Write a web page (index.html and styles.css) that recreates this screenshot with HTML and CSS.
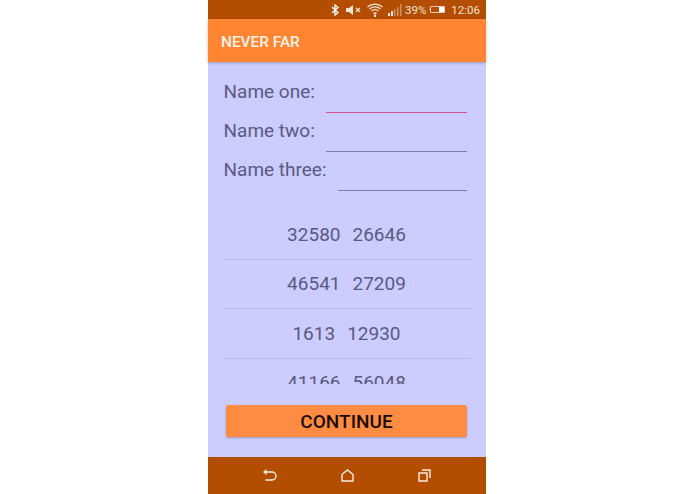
FILE: index.html
```html
<!DOCTYPE html>
<html lang="en">
<head>
    <meta charset="UTF-8">
    <title>Never Far</title>
    <link rel="stylesheet" href="styles.css">
</head>
<body>
    <div class="phone">
        <div class="status-bar">
            <svg class="ic-bt" width="8" height="12" viewBox="0 0 8 12"><path d="M1 3l6 5.500L4 11V1l3 2.500L1 9" fill="none" stroke="#fff" stroke-width="1.300"/></svg>
            <svg class="ic-mute" width="16" height="10" viewBox="0 0 16 10"><path d="M0 3h3l4-3v10L3 7H0z" fill="#f3e3d8"/><path d="M10 3l4 4M14 3l-4 4" stroke="#f3e3d8" stroke-width="1.200"/></svg>
            <svg class="ic-wifi" width="16" height="15" viewBox="0 0 16 15"><path d="M.5 5a11 11 0 0 1 15 0M2.500 7a8 8 0 0 1 11 0M4.500 9a5 5 0 0 1 7 0" fill="none" stroke="#f3e3d8" stroke-width="1.200"/><path d="M6.500 10.500h3v1.500h-3zM7 12.500h2V15H7z" fill="#f3e3d8"/></svg>
            <svg class="ic-signal" width="14" height="12" viewBox="0 0 14 12"><path d="M0 9h2v3H0zM3 7h2v5H3z" fill="#f3e3d8"/><path d="M6 5h1.500v7H6zM9 3h1.500v9H9zM12 0h1.500v12H12z" fill="#cf8f68"/></svg>
            <span class="pct">39%</span>
            <svg class="ic-batt" width="18" height="9" viewBox="0 0 18 9"><path d="M1.500 1.500h14v6h-14z" fill="none" stroke="#e9cdb9" stroke-width="1"/><path d="M.5 3.500h1v2h-1z" fill="#e9cdb9"/><path d="M10 2h5v5h-5z" fill="#fff"/></svg>
            <span class="clock">12:06</span>
        </div>
        <header class="app-bar">NEVER FAR</header>
        <main class="content">
            <div class="names">
                <div class="name-row">
                    <label>Name one:</label>
                    <div class="field active"></div>
                </div>
                <div class="name-row">
                    <label>Name two:</label>
                    <div class="field"></div>
                </div>
                <div class="name-row">
                    <label>Name three:</label>
                    <div class="field"></div>
                </div>
            </div>
            <ul class="numbers">
                <li><span>32580</span><span>26646</span></li>
                <li><span>46541</span><span>27209</span></li>
                <li><span>1613</span><span>12930</span></li>
                <li><span>41166</span><span>56048</span></li>
            </ul>
            <button class="continue">CONTINUE</button>
        </main>
        <nav class="nav-bar">
            <svg width="14" height="13" viewBox="0 0 14 13"><path d="M1.500 3H9a3.800 3.800 0 0 1 0 8H2.500" fill="none" stroke="#fbeee4" stroke-width="1.400"/><path d="M0 3l3.500-3v6z" fill="#fbeee4"/></svg>
            <svg width="13" height="13" viewBox="0 0 13 13"><path d="M1 5.500L6.500 1 12 5.500V12H1z" fill="none" stroke="#fbeee4" stroke-width="1.400"/></svg>
            <svg width="13" height="13" viewBox="0 0 13 13"><path d="M1 4h8v8H1z" fill="none" stroke="#fbeee4" stroke-width="1.400"/><path d="M4 1h8v8" fill="none" stroke="#fbeee4" stroke-width="1.400"/></svg>
        </nav>
    </div>
</body>
</html>
```

FILE: styles.css
```css
html, body {
    margin: 0;
    height: 100%;
    background-color: #fff;
}
body {
    font-family: 'Roboto', sans-serif;
}
.phone {
    width: 278px;
    height: 494px;
    margin-left: 208px;
    display: flex;
    flex-direction: column;
    background-color: #ccccff;
}
.status-bar {
    height: 19px;
    flex: none;
    display: flex;
    align-items: center;
    justify-content: flex-end;
    padding-right: 6px;
    background-color: #b34d00;
    color: #f3e3d8;
    font-size: 11.500px;
}
.ic-bt { margin-right: 7px; }
.ic-mute { margin-right: 5px; }
.ic-wifi { margin-right: 5px; }
.ic-signal { margin-right: 3px; }
.pct { margin-right: 3px; }
.ic-batt { margin-right: 4px; }
.app-bar {
    height: 43px;
    flex: none;
    box-sizing: border-box;
    padding: 14px 0 0 13px;
    background-color: #ff8533;
    color: #fff3e8;
    font-size: 15.400px;
    font-weight: 500;
    box-shadow: 0 1px 3px rgba(0, 0, 0, 0.25);
    position: relative;
}
.content {
    flex: 1;
    display: flex;
    flex-direction: column;
    min-height: 0;
    padding: 0 15px 0 16px;
}
.names {
    padding-top: 18px;
    margin-right: 4px;
}
.name-row {
    display: flex;
    height: 39px;
    color: #5a5a80;
    font-size: 19px;
}
.name-row label {
    margin-left: -0.500px;
    margin-right: 11.500px;
    line-height: 23px;
}
.field {
    flex: 1;
    height: 33px;
    box-sizing: border-box;
    border-bottom: 1px solid #7c7ca6;
}
.field.active {
    border-bottom-color: #d1558a;
}
.numbers {
    list-style: none;
    margin: 13px 0 0;
    padding: 0;
    height: 174px;
    overflow: hidden;
    color: #5a5a80;
    font-size: 19px;
}
.numbers li {
    height: 48.500px;
    display: flex;
    justify-content: center;
    align-items: center;
    gap: 12px;
    padding-right: 2px;
    border-bottom: 1px solid #bcbcec;
}
.continue {
    display: block;
    margin: 21px 0 0 2px;
    width: 241px;
    height: 32px;
    padding: 0;
    border: none;
    border-radius: 2px;
    background-color: #ff8c42;
    color: #1a0c05;
    font-family: inherit;
    font-size: 19px;
    font-weight: 500;
    box-shadow: 0 1px 2px rgba(0, 0, 0, 0.25);
}
.nav-bar {
    height: 37px;
    flex: none;
    margin-top: auto;
    display: flex;
    align-items: center;
    justify-content: space-between;
    padding: 0 55px;
    background-color: #b34d00;
}
```
